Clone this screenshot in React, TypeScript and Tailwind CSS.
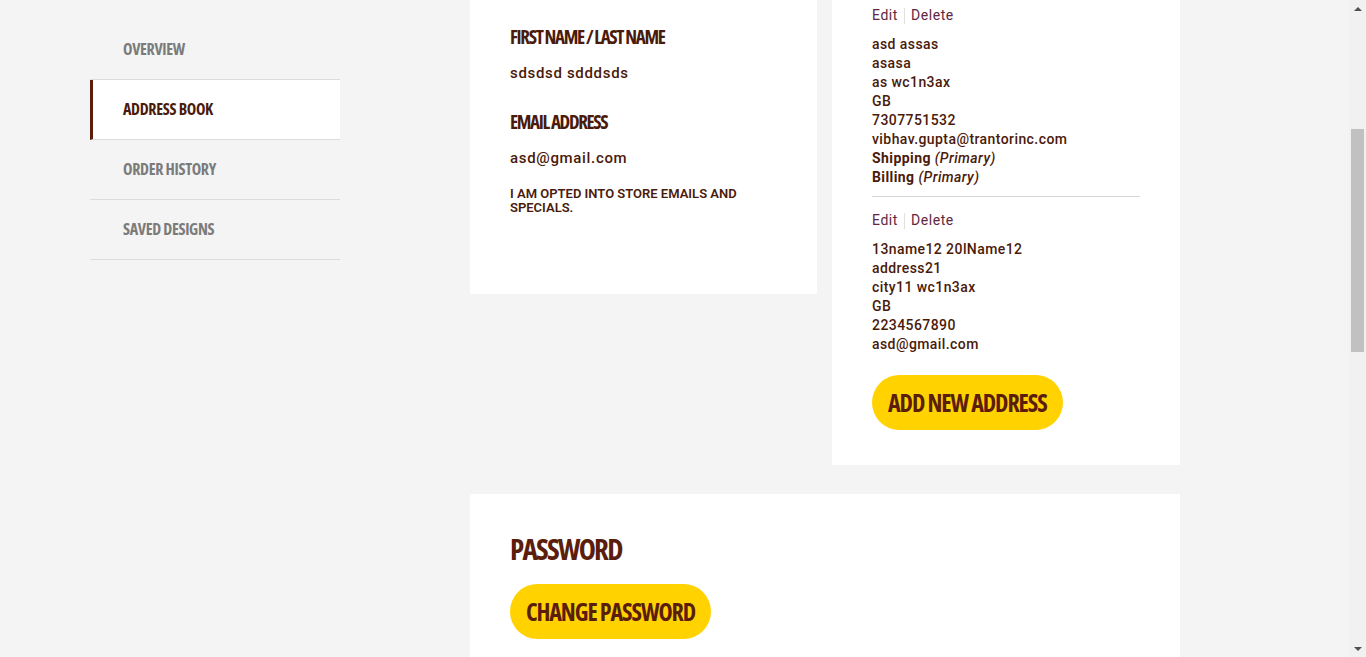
import { ReactNode } from 'react';

const cond = "font-['Open_Sans',sans-serif] font-stretch-[75%]";
const body = "font-['Roboto','Liberation_Sans',sans-serif]";

const navItems = ['OVERVIEW', 'ADDRESS BOOK', 'ORDER HISTORY', 'SAVED DESIGNS'];

function Sidebar() {
  return (
    <nav className="mt-[20px] w-[250px] shrink-0">
      {navItems.map((item) => {
        const active = item === 'ADDRESS BOOK';
        return (
          <div
            key={item}
            className={`flex h-[60px] items-center border-b border-[#dcdcdc] pb-[2px] ${
              active ? 'border-l-[3px] border-l-[#5b1d0c] bg-white pl-[30px]' : 'pl-[33px]'
            }`}
          >
            <span
              className={`${cond} text-[16px] font-bold tracking-[-0.02em] ${
                active ? 'text-[#4a1a0a]' : 'text-[#7b7b7b]'
              }`}
            >
              {item}
            </span>
          </div>
        );
      })}
    </nav>
  );
}

function EditDelete() {
  return (
    <div className={`${body} flex items-center text-[14px] tracking-[0.04em] text-[#62263f]`}>
      <span className="pr-[6px]">Edit</span>
      <span className="h-[16px] w-px bg-[#e0e0e0]" />
      <span className="pl-[6px]">Delete</span>
    </div>
  );
}

function AddressLines({ lines, children }: { lines: string[]; children?: ReactNode }) {
  return (
    <div className={`${body} mt-[9px] text-[14px] font-medium leading-[19px] tracking-[0.03em] text-[#4a1a0a]`}>
      {lines.map((l) => (
        <div key={l}>{l}</div>
      ))}
      {children}
    </div>
  );
}

function YellowButton({ label }: { label: string }) {
  return (
    <button
      className={`${cond} h-[55px] rounded-full bg-[#ffd200] px-[16px] text-[24px] font-bold tracking-[-0.045em] text-[#5b1d0c]`}
    >
      {label}
    </button>
  );
}

function Scrollbar() {
  return (
    <div className="flex w-[17px] shrink-0 flex-col items-center bg-[#f1f1f1]">
      <div className="flex h-[17px] items-center justify-center">
        <div className="h-0 w-0 border-x-[4px] border-b-[4px] border-x-transparent border-b-[#505050]" />
      </div>
      <div className="w-full flex-1 px-[2px]">
        <div className="mt-[112px] h-[223px] w-full bg-[#c1c1c1]" />
      </div>
      <div className="flex h-[17px] items-center justify-center">
        <div className="h-0 w-0 border-x-[4px] border-t-[4px] border-x-transparent border-t-[#505050]" />
      </div>
    </div>
  );
}

export default function App() {
  return (
    <div className="flex h-[657px] w-full overflow-hidden bg-[#f4f4f4]">
      <div className="flex flex-1 pl-[90px]">
        <Sidebar />
        <main className="ml-[130px] w-[710px] shrink-0">
          <div className="flex items-start gap-[15px]">
            <section className="h-[294px] w-[347px] bg-white px-[40px] pt-[24px]">
              <h3 className={`${cond} text-[19px] font-bold leading-[26px] tracking-[-0.07em] text-[#4a1a0a]`}>
                FIRST NAME / LAST NAME
              </h3>
              <p className={`${body} mt-[12px] text-[15px] font-medium tracking-[0.045em] text-[#4a1a0a]`}>
                sdsdsd sdddsds
              </p>
              <h3
                className={`${cond} mt-[24px] text-[19px] font-bold leading-[26px] tracking-[-0.07em] text-[#4a1a0a]`}
              >
                EMAIL ADDRESS
              </h3>
              <p className={`${body} mt-[12px] text-[15px] font-medium tracking-[0.045em] text-[#4a1a0a]`}>
                asd@gmail.com
              </p>
              <p className={`${body} mt-[18px] text-[13px] font-semibold leading-[14px] text-[#4a1a0a]`}>
                I AM OPTED INTO STORE EMAILS AND SPECIALS.
              </p>
            </section>
            <section className="w-[348px] bg-white px-[40px] pb-[35px] pt-[5px]">
              <EditDelete />
              <AddressLines
                lines={['asd assas', 'asasa', 'as wc1n3ax', 'GB', '7307751532', 'vibhav.gupta@trantorinc.com']}
              >
                <div className="font-bold">
                  Shipping <i className="font-medium">(Primary)</i>
                </div>
                <div className="font-bold">
                  Billing <i className="font-medium">(Primary)</i>
                </div>
              </AddressLines>
              <div className="mt-[9px] h-px bg-[#d6d6d6]" />
              <div className="mt-[13px]">
                <EditDelete />
              </div>
              <AddressLines
                lines={['13name12 20lName12', 'address21', 'city11 wc1n3ax', 'GB', '2234567890', 'asd@gmail.com']}
              />
              <div className="mt-[21px]">
                <YellowButton label="ADD NEW ADDRESS" />
              </div>
            </section>
          </div>
          <section className="mt-[29px] h-[200px] bg-white px-[40px] pt-[34px]">
            <h2 className={`${cond} text-[29px] font-bold leading-[42px] tracking-[-0.06em] text-[#5b1d0c]`}>
              PASSWORD
            </h2>
            <div className="mt-[14px]">
              <YellowButton label="CHANGE PASSWORD" />
            </div>
          </section>
        </main>
      </div>
      <Scrollbar />
    </div>
  );
}
